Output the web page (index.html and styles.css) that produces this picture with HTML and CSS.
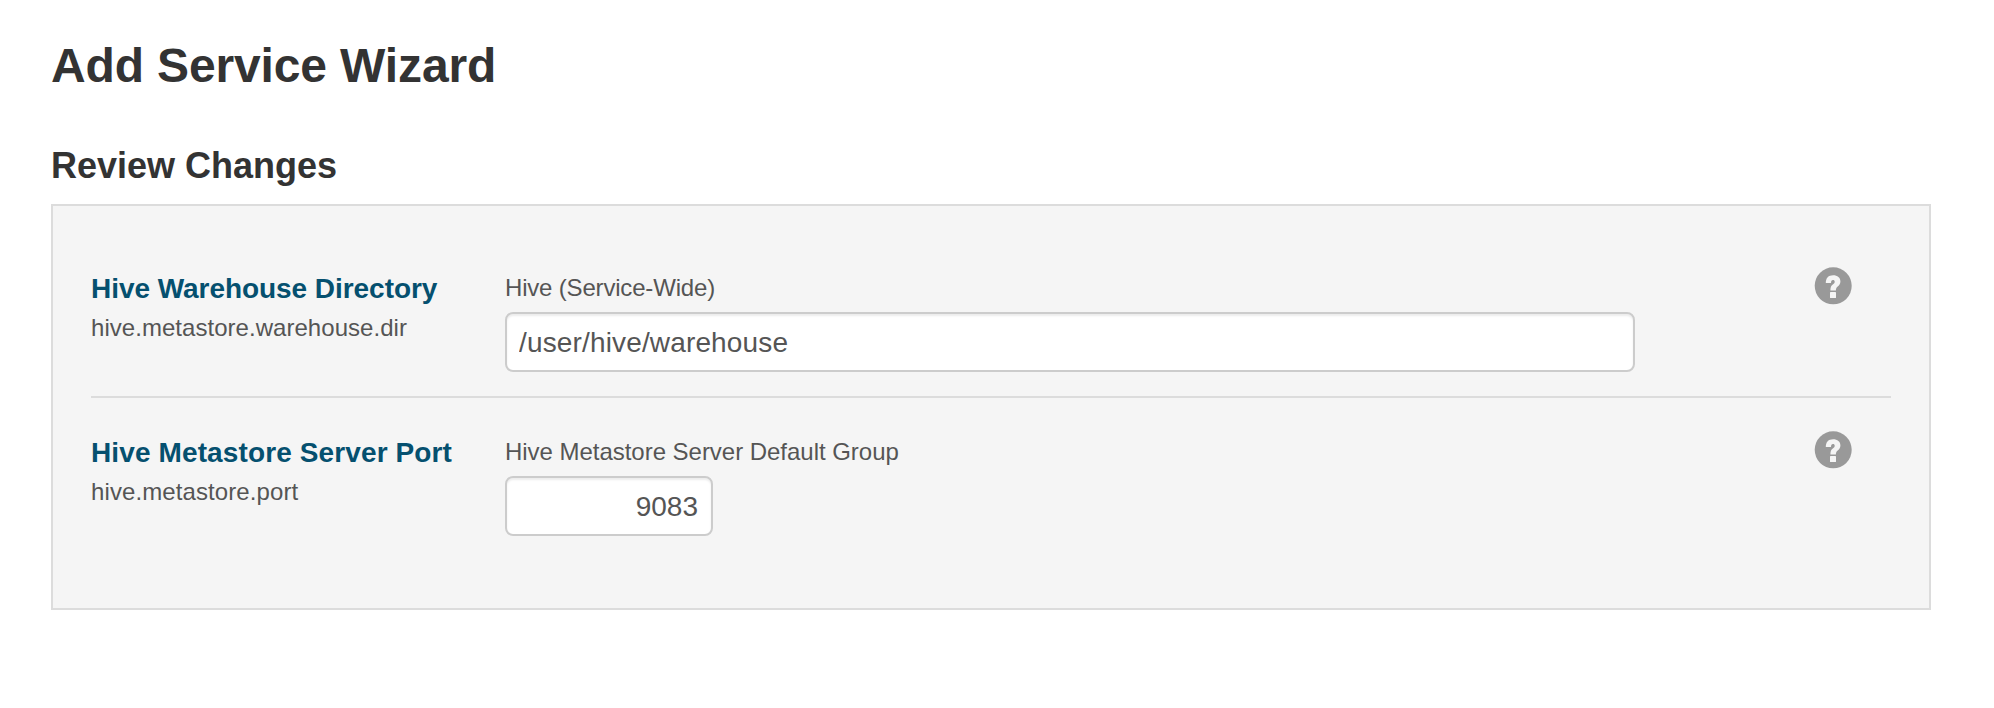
FILE: index.html
```html
<!DOCTYPE html>
<html lang="en">
<head>
<meta charset="utf-8">
<title>Add Service Wizard</title>
<link rel="stylesheet" href="styles.css">
</head>
<body>
<main class="wizard">
  <h1 class="wizard-title">Add Service Wizard</h1>
  <h2 class="step-title">Review Changes</h2>
  <section class="panel">
    <div class="row">
      <div class="property">
        <div class="property-name">Hive Warehouse Directory</div>
        <div class="property-key">hive.metastore.warehouse.dir</div>
      </div>
      <div class="field">
        <label class="group group-service" for="dir">Hive (Service-Wide)</label>
        <input class="input" id="dir" type="text" value="/user/hive/warehouse">
      </div>
      <svg class="help" viewBox="-0.7 -0.3 38 38" role="img" aria-label="Help">
        <circle cx="18.5" cy="18.5" r="18.5" fill="#999"/>
        <path d="M11.100 15.700C11.100 10.700 13.800 8 18.400 8C22.800 8 25.700 10.400 25.700 14C25.700 16.500 24.700 17.900 23 19.200C21.700 20.200 21.200 21.200 21.200 23.300H15.700C15.700 20.200 16.300 18.600 18.100 17.300C19.500 16.300 20 15.500 20 14.500C20 13.300 19.300 12.700 18.300 12.700C17 12.700 16.300 13.700 16.300 15.700Z" fill="#f5f5f5"/>
        <rect x="15.300" y="24.800" width="6" height="6" rx=".6" fill="#f5f5f5"/>
      </svg>
    </div>
    <div class="row">
      <div class="property">
        <div class="property-name name-port">Hive Metastore Server Port</div>
        <div class="property-key key-port">hive.metastore.port</div>
      </div>
      <div class="field">
        <label class="group" for="port">Hive Metastore Server Default Group</label>
        <input class="input input-number" id="port" type="text" value="9083">
      </div>
      <svg class="help" viewBox="-0.7 -0.3 38 38" role="img" aria-label="Help">
        <circle cx="18.5" cy="18.5" r="18.5" fill="#999"/>
        <path d="M11.100 15.700C11.100 10.700 13.800 8 18.400 8C22.800 8 25.700 10.400 25.700 14C25.700 16.500 24.700 17.900 23 19.200C21.700 20.200 21.200 21.200 21.200 23.300H15.700C15.700 20.200 16.300 18.600 18.100 17.300C19.500 16.300 20 15.500 20 14.500C20 13.300 19.300 12.700 18.300 12.700C17 12.700 16.300 13.700 16.300 15.700Z" fill="#f5f5f5"/>
        <rect x="15.300" y="24.800" width="6" height="6" rx=".6" fill="#f5f5f5"/>
      </svg>
    </div>
  </section>
</main>
</body>
</html>
```
FILE: styles.css
```css
* { box-sizing: border-box; }

body {
  margin: 0;
  background: #fff;
  color: #555;
  font-family: "Liberation Sans", Arial, sans-serif;
}

.wizard { padding: 36px 63px 0 51px; }

.wizard-title {
  margin: 0;
  color: #333;
  font-size: 48px;
  line-height: 60px;
  letter-spacing: -0.14px;
}

.step-title {
  margin: 50px 0 18px;
  color: #333;
  font-size: 36px;
  line-height: 40px;
}

.panel {
  height: 406px;
  padding: 28px 38px 0;
  border: 2px solid #dcdcdc;
  background: #f5f5f5;
}

.row {
  display: grid;
  grid-template-columns: 414px 1130px 1fr;
  align-items: start;
  padding: 34px 0 24px;
}

.row + .row { border-top: 2px solid #dcdcdc; }

.property-name {
  padding-top: 1px;
  color: #05506f;
  font-size: 28px;
  font-weight: bold;
  line-height: 39px;
  letter-spacing: -0.05px;
  white-space: nowrap;
}

.name-port { letter-spacing: 0.12px; }

.property-key,
.group {
  display: block;
  font-size: 24px;
  line-height: 40px;
  white-space: nowrap;
}

.property-key { letter-spacing: 0.04px; }
.key-port { letter-spacing: 0.1px; }
.group { letter-spacing: -0.03px; }
.group-service { letter-spacing: -0.18px; }

.input {
  display: block;
  width: 100%;
  height: 60px;
  margin: 4px 0 0;
  padding: 2px 12px 0;
  border: 2px solid #ccc;
  border-radius: 8px;
  background: #fff;
  box-shadow: inset 0 2px 2px rgba(0, 0, 0, 0.075);
  color: #555;
  font: 28px "Liberation Sans", Arial, sans-serif;
  letter-spacing: 0.15px;
}

.input-number {
  width: 208px;
  padding-right: 13px;
  letter-spacing: 0;
  text-align: right;
}

.help {
  width: 38px;
  height: 38px;
  margin: -1px 39px 0 0;
  justify-self: end;
}
```
